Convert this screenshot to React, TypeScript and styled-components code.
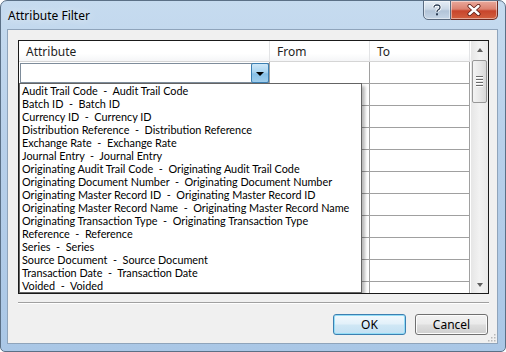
import React from "react";
import styled, { createGlobalStyle } from "styled-components";

const Global = createGlobalStyle`
  html, body { margin: 0; padding: 0; background: #ffffff; }
  body { font-family: "Segoe UI", "Noto Sans", "Liberation Sans", sans-serif; }
  * { box-sizing: border-box; }
`;

const Window = styled.div`
  width: 506px;
  height: 352px;
  display: flex;
  flex-direction: column;
  border: 1px solid #5b7086;
  border-radius: 7px 7px 5px 5px;
  background: linear-gradient(180deg, #c6dbef 0%, #b8d0ea 40%, #aac7e6 100%);
  padding: 0 7px 7px 6px;
  overflow: hidden;
`;

const TitleBar = styled.div`
  height: 28px;
  flex: none;
  display: flex;
  align-items: flex-start;
`;

const Title = styled.div`
  font-family: "Segoe UI", "Noto Sans", "Liberation Sans", sans-serif;
  font-size: 12px;
  color: #000;
  padding: 6px 0 0 1px;
  text-shadow: 0 0 8px rgba(255, 255, 255, 0.9);
`;

const Caption = styled.div`
  margin-left: auto;
  margin-right: 0;
  display: flex;
  margin-top: -1px;
`;

const CapButton = styled.div<{ $close?: boolean }>`
  height: 20px;
  width: ${(p) => (p.$close ? "47px" : "28px")};
  display: flex;
  align-items: center;
  justify-content: center;
  border: 1px solid ${(p) => (p.$close ? "#6b2a22" : "#5a6b80")};
  border-left-width: ${(p) => (p.$close ? "0" : "1px")};
  border-radius: ${(p) => (p.$close ? "0 0 5px 0" : "0 0 0 5px")};
  background: ${(p) =>
    p.$close
      ? "linear-gradient(180deg, #e9a99c 0%, #dc8270 45%, #c7452c 55%, #d2603f 100%)"
      : "linear-gradient(180deg, #e6eef6 0%, #cbd8e6 45%, #b2c4d8 55%, #c5d5e6 100%)"};
  box-shadow: inset 0 0 0 1px rgba(255, 255, 255, 0.45);
`;

const Client = styled.div`
  flex: 1;
  background: #f0f0f0;
  border: 1px solid #8fa4bb;
  padding: 10px 8px 8px 10px;
  display: flex;
  flex-direction: column;
  position: relative;
`;

const GridBox = styled.div`
  height: 254px;
  flex: none;
  border: 1px solid #1a1a1a;
  background: #ffffff;
  display: flex;
`;

const Table = styled.div`
  flex: 1;
  position: relative;
  overflow: hidden;
  display: flex;
  flex-direction: column;
`;

const Row = styled.div<{ $header?: boolean }>`
  display: grid;
  grid-template-columns: 251px 100px 100px;
  height: ${(p) => (p.$header ? "21px" : "22px")};
  flex: none;
  background: ${(p) =>
    p.$header ? "linear-gradient(180deg, #ffffff 0%, #ffffff 60%, #f3f4f6 100%)" : "#ffffff"};
`;

const Cell = styled.div<{ $header?: boolean }>`
  border-right: 1px solid ${(p) => (p.$header ? "#e3e4e6" : "#a0a0a0")};
  border-bottom: 1px solid ${(p) => (p.$header ? "#d5d5d5" : "#a0a0a0")};
  font-family: "Segoe UI", "Noto Sans", "Liberation Sans", sans-serif;
  font-size: 12px;
  color: #1e1e1e;
  padding-left: 7px;
  display: flex;
  align-items: center;
  white-space: nowrap;
`;

const ComboCell = styled.div`
  border-right: 1px solid #a0a0a0;
  border-bottom: 1px solid #a0a0a0;
  padding: 1px 0 0 1px;
  display: flex;
`;

const Combo = styled.div`
  flex: 1;
  display: flex;
  justify-content: flex-end;
  border: 1px solid #7e8c9a;
  background: #fff;
`;

const DropButton = styled.div`
  width: 18px;
  margin: -1px -1px -1px 0;
  border: 1px solid #3c7fb1;
  border-radius: 2px;
  background: linear-gradient(180deg, #cfe8f8 0%, #a9d4f0 45%, #87c0e6 55%, #9fcdec 100%);
  display: flex;
  align-items: center;
  justify-content: center;
`;

const Arrow = styled.div`
  width: 0;
  height: 0;
  border-left: 4px solid transparent;
  border-right: 4px solid transparent;
  border-top: 4px solid #000;
  margin-top: 1px;
`;

const DropList = styled.div`
  position: absolute;
  left: 0;
  top: 42px;
  width: 343px;
  height: 210px;
  border: 1px solid #646464;
  background: #ffffff;
  box-shadow: 3px 3px 3px rgba(0, 0, 0, 0.28);
  display: flex;
  flex-direction: column;
`;

const ListItem = styled.div`
  height: 13px;
  line-height: 13px;
  overflow: hidden;
  font-family: Lato, "Noto Sans", sans-serif;
  font-size: 10.85px;
  color: #000;
  padding-left: 2px;
  white-space: pre;
`;

const ScrollBar = styled.div`
  width: 17px;
  flex: none;
  background: linear-gradient(90deg, #e6e6e6 0%, #f2f2f2 50%, #e9e9e9 100%);
  display: flex;
  flex-direction: column;
  align-items: center;
`;

const ScrollArrow = styled.div<{ $down?: boolean }>`
  height: 17px;
  width: 17px;
  display: flex;
  align-items: center;
  justify-content: center;
  margin-top: ${(p) => (p.$down ? "auto" : "0")};
`;

const Tri = styled.div<{ $down?: boolean }>`
  width: 0;
  height: 0;
  border-left: 3.5px solid transparent;
  border-right: 3.5px solid transparent;
  ${(p) =>
    p.$down ? "border-top: 4px solid #5f5f5f;" : "border-bottom: 4px solid #5f5f5f;"}
`;

const Thumb = styled.div`
  width: 15px;
  height: 43px;
  margin-top: 2px;
  border: 1px solid #979797;
  border-radius: 2px;
  background: linear-gradient(90deg, #f3f3f3 0%, #e8e8e8 50%, #d8d8d8 100%);
  display: flex;
  flex-direction: column;
  align-items: center;
  justify-content: center;
  gap: 1px;
`;

const Grip = styled.div`
  width: 7px;
  height: 1px;
  background: #6a6a6a;
  box-shadow: 0 1px 0 #ffffff;
  margin-bottom: 1px;
`;

const Separator = styled.div`
  margin-top: 8px;
  height: 2px;
  flex: none;
  border-top: 1px solid #a0a0a0;
  border-bottom: 1px solid #ffffff;
`;

const ButtonRow = styled.div`
  margin-top: 10px;
  display: flex;
  justify-content: flex-end;
  gap: 9px;
  padding-right: 1px;
`;

const Button = styled.div<{ $default?: boolean }>`
  width: 73px;
  height: 21px;
  border: 1px solid ${(p) => (p.$default ? "#3c7fb1" : "#707070")};
  border-radius: 3px;
  background: ${(p) =>
    p.$default
      ? "linear-gradient(180deg, #f2f9fd 0%, #e3f1fa 45%, #cfe7f5 55%, #c3e0f3 100%)"
      : "linear-gradient(180deg, #f2f2f2 0%, #ebebeb 45%, #dddddd 55%, #cfcfcf 100%)"};
  box-shadow: inset 0 0 0 1px ${(p) => (p.$default ? "#94ddf6" : "#fcfcfc")};
  font-family: "Segoe UI", "Noto Sans", "Liberation Sans", sans-serif;
  font-size: 12px;
  color: #000;
  display: flex;
  align-items: center;
  justify-content: center;
`;

const SizeGrip = styled.svg`
  position: absolute;
  right: 1px;
  bottom: 1px;
`;

const items = [
  "Audit Trail Code  -  Audit Trail Code",
  "Batch ID  -  Batch ID",
  "Currency ID  -  Currency ID",
  "Distribution Reference  -  Distribution Reference",
  "Exchange Rate  -  Exchange Rate",
  "Journal Entry  -  Journal Entry",
  "Originating Audit Trail Code  -  Originating Audit Trail Code",
  "Originating Document Number  -  Originating Document Number",
  "Originating Master Record ID  -  Originating Master Record ID",
  "Originating Master Record Name  -  Originating Master Record Name",
  "Originating Transaction Type  -  Originating Transaction Type",
  "Reference  -  Reference",
  "Series  -  Series",
  "Source Document  -  Source Document",
  "Transaction Date  -  Transaction Date",
  "Voided  -  Voided",
];

export default function App() {
  return (
    <>
      <Global />
      <Window>
        <TitleBar>
          <Title>Attribute Filter</Title>
          <Caption>
            <CapButton>
              <svg width="10" height="12" viewBox="0 0 10 12">
                <path
                  d="M2 3.5 Q2 1 5 1 Q8 1 8 3.5 Q8 5 6 6 Q5 6.6 5 8"
                  fill="none"
                  stroke="#ffffff"
                  strokeWidth="3"
                />
                <path
                  d="M2 3.5 Q2 1 5 1 Q8 1 8 3.5 Q8 5 6 6 Q5 6.6 5 8"
                  fill="none"
                  stroke="#2c3e55"
                  strokeWidth="1.3"
                />
                <rect x="4" y="9.3" width="2" height="2" fill="#2c3e55" />
              </svg>
            </CapButton>
            <CapButton $close>
              <svg width="14" height="12" viewBox="0 0 14 12">
                <path d="M2.5 2 L11.5 10 M11.5 2 L2.5 10" stroke="#5a1a12" strokeWidth="4" strokeLinecap="round" />
                <path d="M2.5 2 L11.5 10 M11.5 2 L2.5 10" stroke="#ffffff" strokeWidth="2.4" strokeLinecap="round" />
              </svg>
            </CapButton>
          </Caption>
        </TitleBar>
        <Client>
          <GridBox>
            <Table>
              <Row $header>
                <Cell $header>Attribute</Cell>
                <Cell $header>From</Cell>
                <Cell $header>To</Cell>
              </Row>
              <Row>
                <ComboCell>
                  <Combo>
                    <DropButton>
                      <Arrow />
                    </DropButton>
                  </Combo>
                </ComboCell>
                <Cell />
                <Cell />
              </Row>
              {Array.from({ length: 10 }).map((_, i) => (
                <Row key={i}>
                  <Cell />
                  <Cell />
                  <Cell />
                </Row>
              ))}
              <DropList>
                {items.map((t) => (
                  <ListItem key={t}>{t}</ListItem>
                ))}
              </DropList>
            </Table>
            <ScrollBar>
              <ScrollArrow>
                <Tri />
              </ScrollArrow>
              <Thumb>
                <Grip />
                <Grip />
                <Grip />
                <Grip />
              </Thumb>
              <ScrollArrow $down>
                <Tri $down />
              </ScrollArrow>
            </ScrollBar>
          </GridBox>
          <Separator />
          <ButtonRow>
            <Button $default>OK</Button>
            <Button>Cancel</Button>
          </ButtonRow>
          <SizeGrip width="10" height="10" viewBox="0 0 10 10">
            {[
              [8, 2],
              [8, 5],
              [5, 5],
              [8, 8],
              [5, 8],
              [2, 8],
            ].map(([x, y]) => (
              <rect key={`${x}-${y}`} x={x} y={y} width="1.5" height="1.5" fill="#b8b8b8" />
            ))}
          </SizeGrip>
        </Client>
      </Window>
    </>
  );
}
